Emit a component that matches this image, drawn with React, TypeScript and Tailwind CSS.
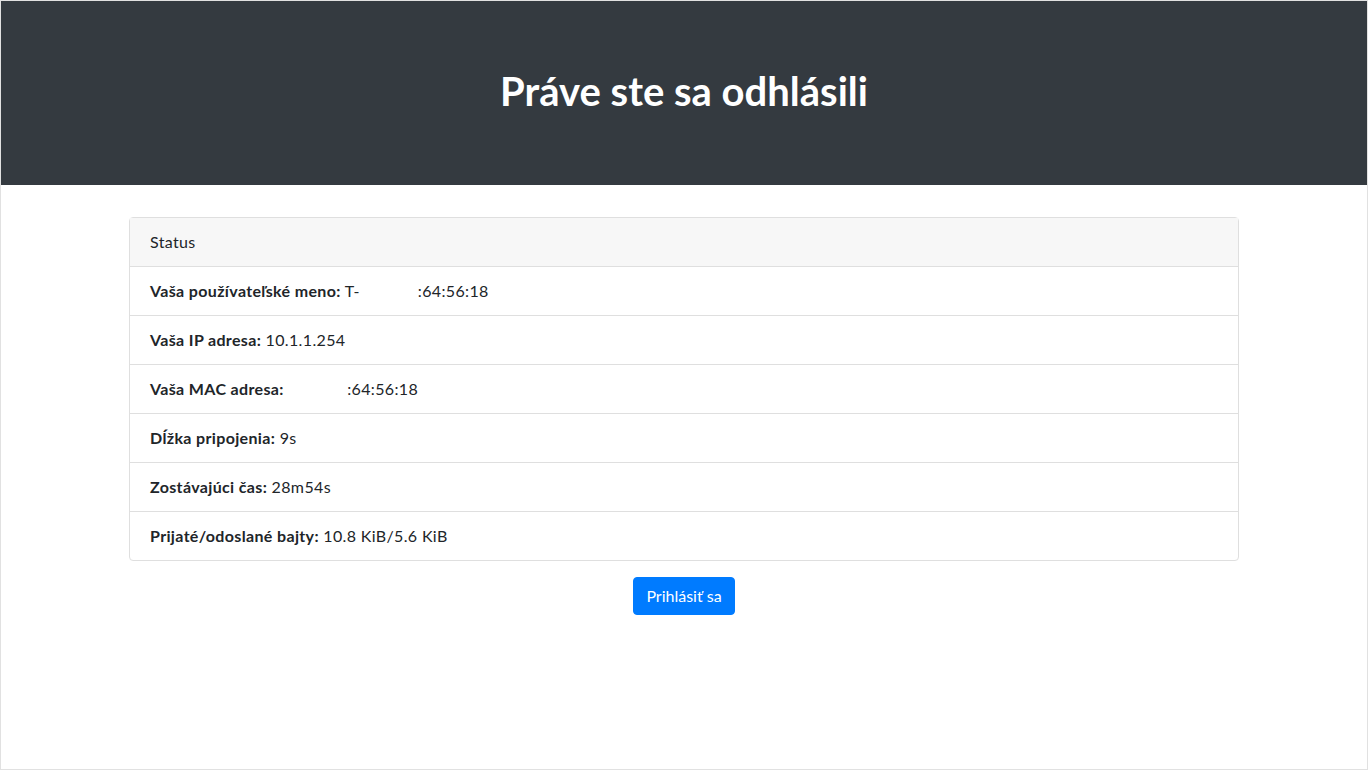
const rows: { label: string; value: React.ReactNode }[] = [
  {
    label: 'Vaša používateľské meno:',
    value: (
      <>
        T-<span className="inline-block w-[58px]" />:64:56:18
      </>
    ),
  },
  { label: 'Vaša IP adresa:', value: '10.1.1.254' },
  {
    label: 'Vaša MAC adresa:',
    value: (
      <>
        <span className="inline-block w-[59px]" />:64:56:18
      </>
    ),
  },
  { label: 'Dĺžka pripojenia:', value: '9s' },
  { label: 'Zostávajúci čas:', value: '28m54s' },
  { label: 'Prijaté/odoslané bajty:', value: '10.8 KiB/5.6 KiB' },
];

export default function App() {
  return (
    <div
      className="box-border flex h-[770px] flex-col border border-[#e1e1e1] bg-white text-[16px] leading-6 tracking-[0.35px] text-[#212529]"
      style={{ fontFamily: '"Segoe UI", Lato, "Noto Sans", sans-serif' }}
    >
      <header className="bg-[#343a40] px-8 pt-[66px] pb-[62px] text-center">
        <h1 className="mb-2 text-[40px] font-bold leading-[48px] tracking-normal text-white">Práve ste sa odhlásili</h1>
      </header>

      <main className="mx-auto mt-8 w-[1110px]">
        <div className="rounded border border-[#dfdfdf]">
          <div className="border-b border-[#dfdfdf] bg-[#f7f7f7] px-5 py-3">Status</div>
          <ul>
            {rows.map((r, i) => (
              <li
                key={r.label}
                className={`px-5 py-3 ${i < rows.length - 1 ? 'border-b border-[#dfdfdf]' : ''}`}
              >
                <strong className="font-bold">{r.label}</strong> {r.value}
              </li>
            ))}
          </ul>
        </div>

        <div className="mt-4 flex justify-center">
          <button className="rounded border border-[#007bff] bg-[#007bff] px-3 py-1.5 leading-6 tracking-normal text-white">
            Prihlásiť sa
          </button>
        </div>
      </main>
    </div>
  );
}
